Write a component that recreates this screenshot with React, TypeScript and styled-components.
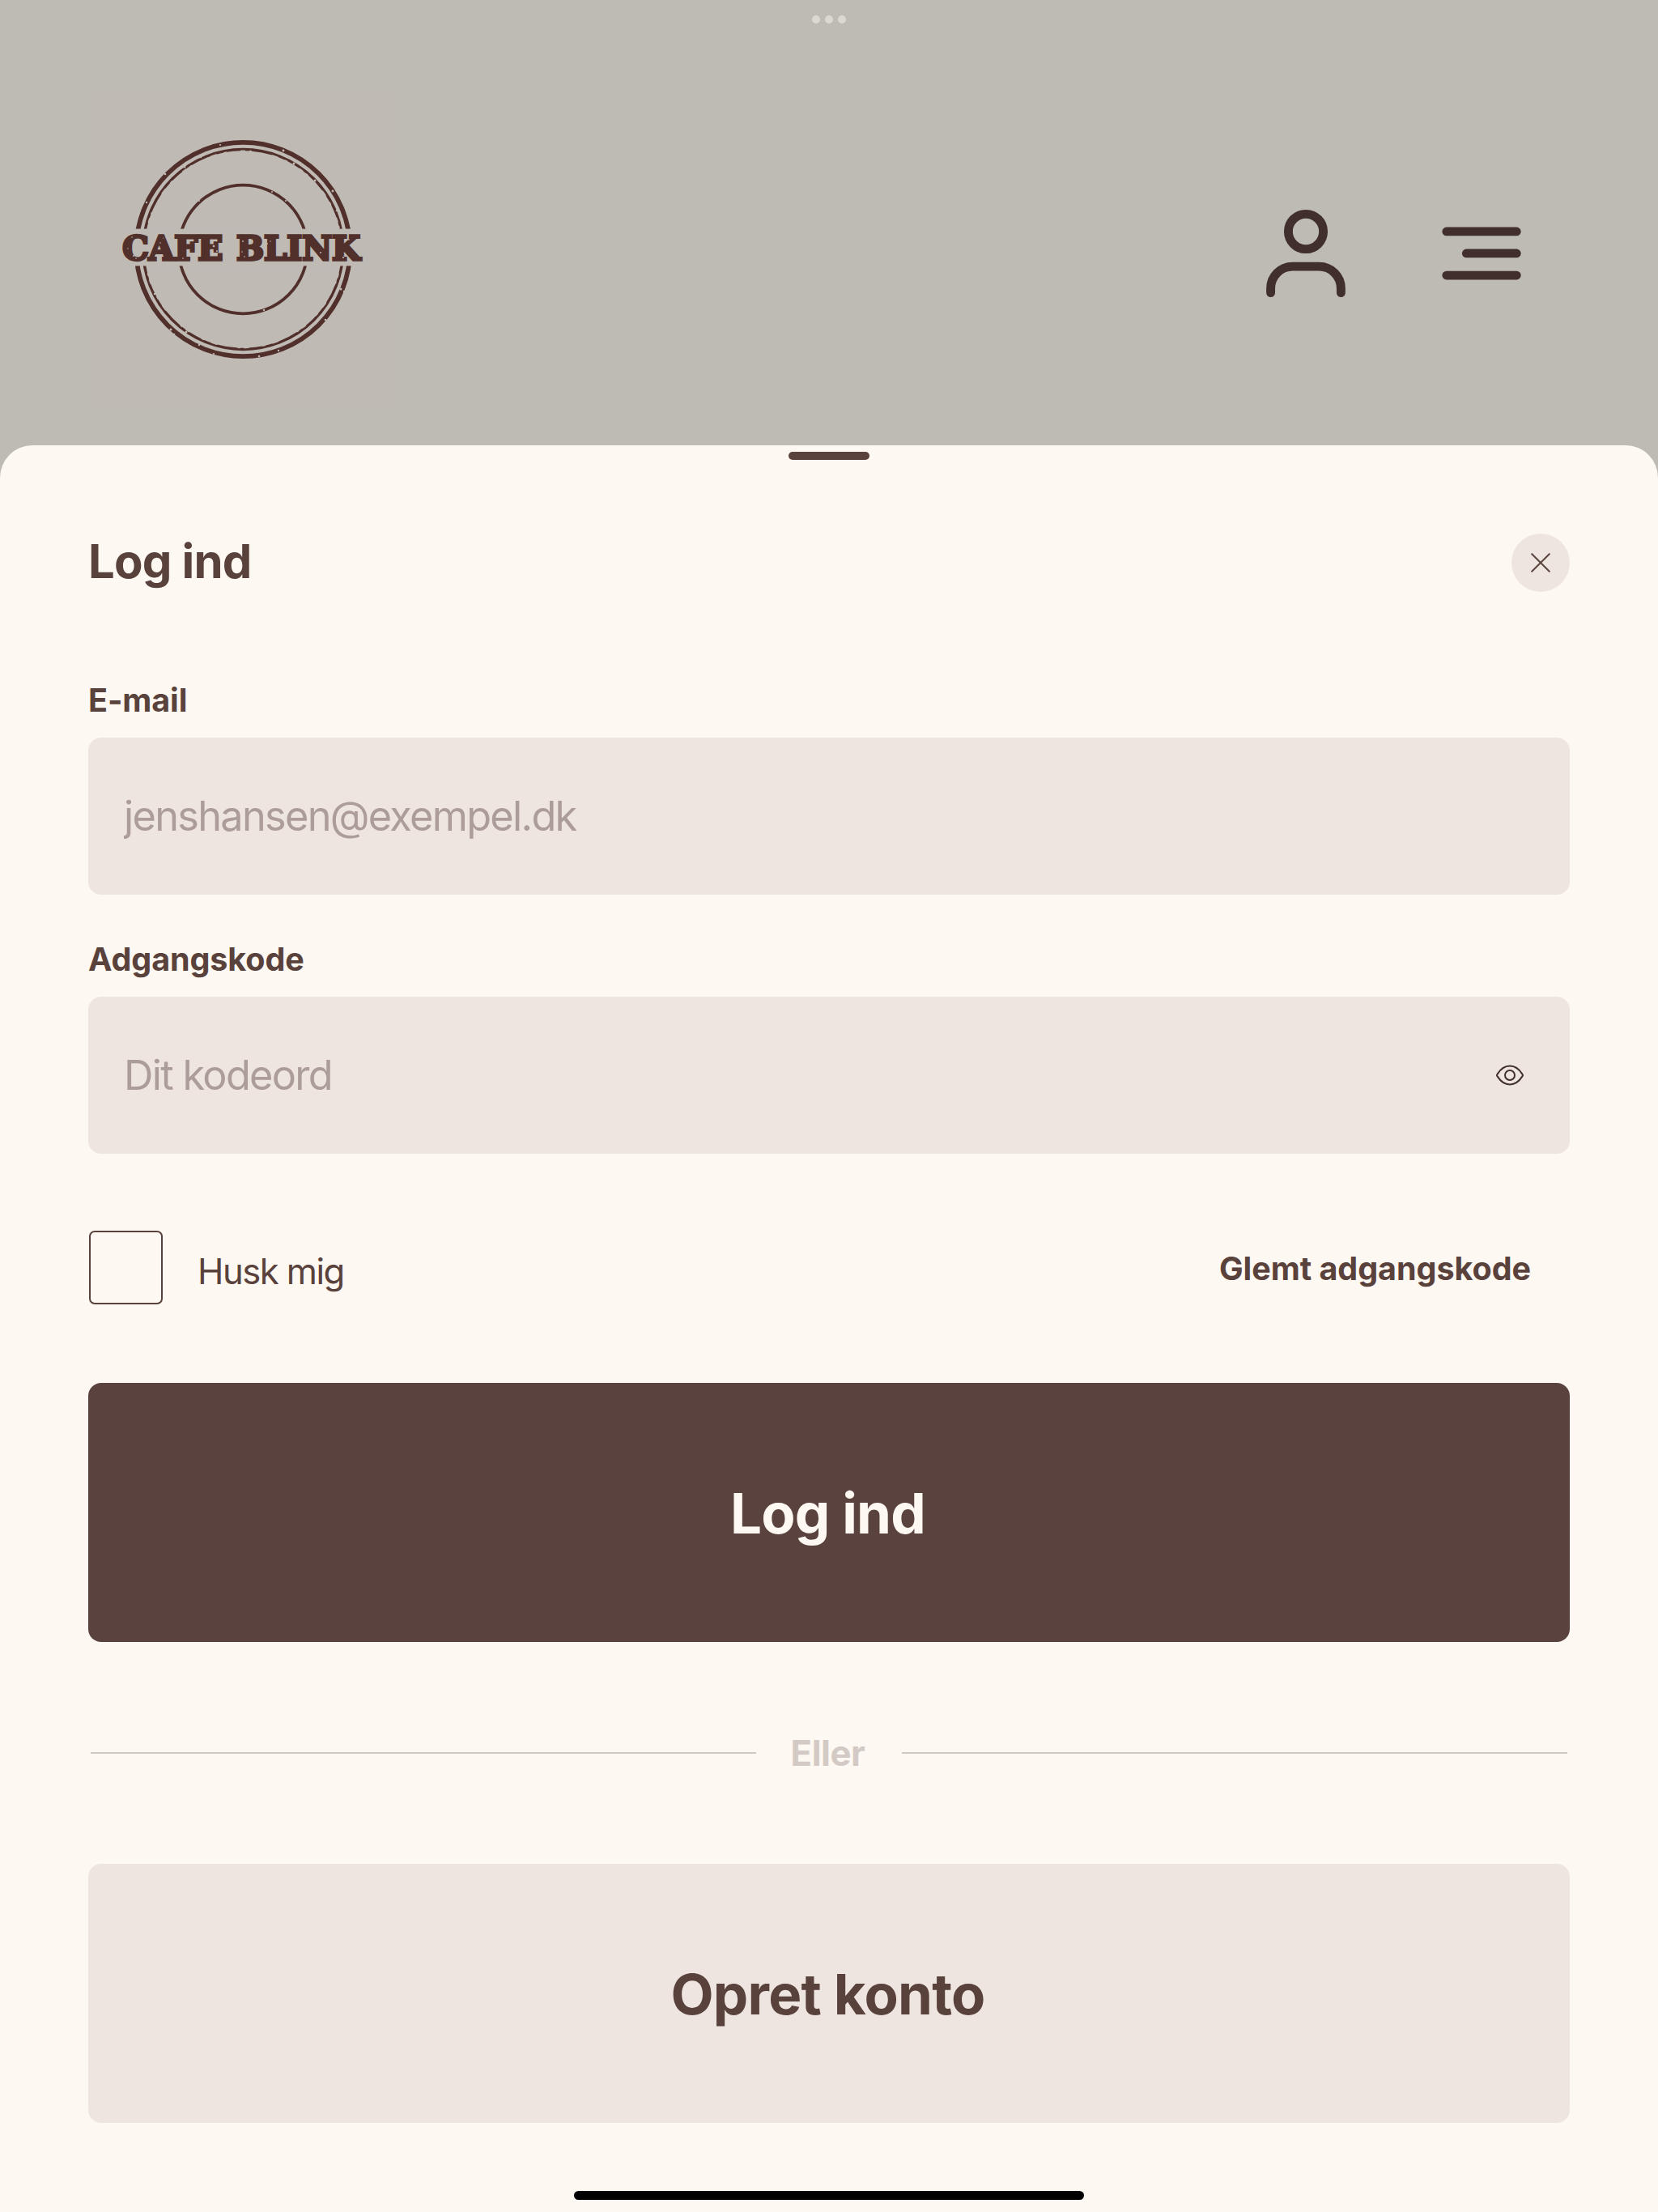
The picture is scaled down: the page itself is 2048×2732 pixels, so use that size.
import React from 'react';
import styled, { createGlobalStyle } from 'styled-components';

const GlobalStyle = createGlobalStyle`
  * {
    box-sizing: border-box;
  }

  body {
    margin: 0;
    background: #bebbb3;
    font-family: Inter, 'Liberation Sans', sans-serif;
  }
`;

const Screen = styled.div`
  display: flex;
  flex-direction: column;
  width: 2048px;
  height: 2732px;
  overflow: hidden;
  background: #bebbb3;
  color: #59413c;
`;

const Header = styled.header`
  display: flex;
  flex-direction: column;
  height: 550px;
`;

const Multitask = styled.div`
  display: flex;
  justify-content: center;
  gap: 6px;
  padding-top: 19px;
  height: 108px;

  span {
    width: 10px;
    height: 10px;
    border-radius: 50%;
    background: #dcd9d1;
  }
`;

const NavBar = styled.div`
  display: flex;
  justify-content: space-between;
  align-items: flex-start;
  padding: 0 158px 0 108px;
`;

const LogoBox = styled.div`
  width: 384px;
  height: 400px;
  background: #bfbab4;

  svg {
    display: block;
  }
`;

const NavIcons = styled.div`
  display: flex;
  align-items: center;
  gap: 96px;
  padding-top: 140px;
`;

const IconButton = styled.button`
  display: flex;
  padding: 0;
  border: none;
  background: none;
  color: #412f2d;
  cursor: pointer;
`;

const Sheet = styled.main`
  display: flex;
  flex-direction: column;
  flex: 1;
  padding: 8px 109px 0;
  border-radius: 40px 40px 0 0;
  background: #fdf8f1;
`;

const Handle = styled.div`
  align-self: center;
  width: 100px;
  height: 10px;
  border-radius: 5px;
  background: #59413c;
`;

const TitleRow = styled.div`
  display: flex;
  justify-content: space-between;
  align-items: center;
  height: 72px;
  margin: 91px 0 110px;
`;

const Title = styled.h1`
  margin: 0 0 4px;
  font-size: 58px;
  line-height: 68px;
  font-weight: 700;
  letter-spacing: -0.8px;
`;

const CloseButton = styled(IconButton)`
  align-items: center;
  justify-content: center;
  width: 72px;
  height: 72px;
  border-radius: 50%;
  background: #eee5e0;
  color: #59453c;
`;

const Form = styled.form`
  display: flex;
  flex-direction: column;
`;

const Field = styled.div`
  display: flex;
  flex-direction: column;
  margin-bottom: 56px;
`;

const Label = styled.label`
  margin-bottom: 22px;
  font-size: 39.5px;
  line-height: 48px;
  font-weight: 700;
  letter-spacing: -0.1px;
`;

const InputBox = styled.div`
  display: flex;
  align-items: center;
  height: 194px;
  padding: 0 57px 0 44px;
  border-radius: 16px;
  background: #eee5e0;
`;

const Input = styled.input`
  flex: 1;
  height: 100%;
  padding: 0 0 2px;
  border: none;
  outline: none;
  background: none;
  color: #59413c;
  font-family: inherit;
  font-size: 50.4px;
  letter-spacing: -1.68px;

  &::placeholder {
    color: #ac9d98;
    opacity: 1;
  }
`;

const Options = styled.div`
  display: flex;
  justify-content: space-between;
  align-items: center;
  height: 91px;
  margin: 39px 0 97px;
  padding: 0 48px 0 1px;
`;

const Remember = styled.label`
  display: flex;
  align-items: center;
  gap: 43px;

  span {
    padding-top: 11px;
    font-size: 43.6px;
    line-height: 52px;
    letter-spacing: -1.5px;
  }
`;

const Checkbox = styled.input`
  appearance: none;
  width: 91px;
  height: 91px;
  margin: 0;
  border: 2px solid #59413c;
  border-radius: 7px;
`;

const Forgot = styled.a`
  padding-top: 2px;
  font-size: 39.5px;
  line-height: 48px;
  font-weight: 700;
  letter-spacing: -0.05px;
`;

const Button = styled.button<{ $primary?: boolean }>`
  height: 320px;
  padding: 2px 3px 0 0;
  border: none;
  border-radius: 16px;
  background: ${(p) => (p.$primary ? '#5a433e' : '#eee5e0')};
  color: ${(p) => (p.$primary ? '#fdf8f1' : '#59413c')};
  font-family: inherit;
  font-size: 69px;
  font-weight: 700;
  letter-spacing: -0.75px;
  cursor: pointer;
`;

const Divider = styled.div`
  display: flex;
  align-items: center;
  height: 48px;
  margin: 113px 3px;
  color: #d4cac5;
  font-size: 43.6px;
  font-weight: 700;
  letter-spacing: -0.4px;

  &::before,
  &::after {
    content: '';
    width: 822px;
    height: 2px;
    background: #d0c8c2;
  }

  span {
    flex: 1;
    padding-right: 3px;
    text-align: center;
  }
`;

const HomeIndicator = styled.div`
  align-self: center;
  width: 630px;
  height: 11px;
  margin-top: 84px;
  border-radius: 6px;
  background: #000;
`;

// worn spots in the stamp print: x, y, radius
const specks = [
  [164, 71, 1.1], [242, 78, 1.4], [96, 107, 1.3], [73, 142, 1.2], [120, 98, 1.5],
  [140, 86, 1.2], [255, 94, 1.5], [281, 115, 1.5], [303, 128, 1.4], [308, 152, 1.2],
  [313, 249, 1.5], [317, 252, 1.2], [294, 287, 1.3], [270, 312, 1.2], [103, 299, 1.5],
  [107, 305, 1.3], [122, 302, 1.5], [138, 318, 1.2], [156, 329, 1.1], [212, 332, 1.3],
  [236, 325, 1.2], [225, 269, 1.2], [218, 275, 1.2], [228, 129, 1], [245, 140, 1],
  [138, 140, 1], [78, 240, 1.3], [83, 255, 1.2], [57, 208, 1], [60, 211, 0.8],
  [55, 185, 0.8], [50, 199, 0.7], [90, 192, 0.8], [109, 206, 0.9], [118, 211, 0.8],
  [156, 196, 1.3], [160, 202, 0.9], [192, 190, 0.9], [191, 203, 0.8], [194, 209, 0.8],
  [222, 193, 0.9], [250, 205, 0.7], [267, 206, 0.9], [288, 204, 1], [316, 210, 1.1],
  [319, 207, 0.8], [323, 188, 0.8], [94, 186, 0.6], [125, 208, 0.8], [226, 190, 0.7],
];

const Logo = () => (
  <svg width="384" height="400" viewBox="0 0 384 400">
    <g fill="none" stroke="#512f2b">
      <circle cx="192.3" cy="200" r="132.1" strokeWidth="5.7" />
      <circle cx="192.3" cy="200" r="123.8" strokeWidth="2.7" />
      <circle
        cx="192.3"
        cy="200"
        r="123"
        strokeWidth="2.4"
        strokeDasharray="9 4 17 6 5 3 26 8"
      />
      <circle cx="192.3" cy="200" r="79.4" strokeWidth="3.7" />
    </g>
    <rect x="40" y="174.6" width="304" height="45.8" fill="#bfbab4" />
    <g
      fontFamily="'DejaVu Serif', serif"
      fontWeight="700"
      fontSize="41.2"
      fill="#512f2b"
      stroke="#512f2b"
      strokeWidth="3.3"
    >
      <text x="43.2" y="212.7" textLength="124" lengthAdjust="spacingAndGlyphs">
        CAFE
      </text>
      <text x="184" y="212.7" textLength="153" lengthAdjust="spacingAndGlyphs">
        BLINK
      </text>
    </g>
    <g fill="#bfbab4">
      {specks.map(([x, y, r]) => (
        <circle key={`${x}-${y}`} cx={x} cy={y} r={r} />
      ))}
    </g>
  </svg>
);

const UserIcon = () => (
  <svg width="110" height="130" viewBox="1558 248 110 130" fill="none" stroke="currentColor" strokeWidth="10.9" strokeLinecap="round">
    <circle cx="1613" cy="286" r="21.6" />
    <path d="M1569.6 361.6v-5.4a27 27 0 0 1 27-27.1h32.8a27 27 0 0 1 27 27.1v5.4" />
  </svg>
);

const MenuIcon = () => (
  <svg width="126" height="130" viewBox="1764 248 126 130" fill="none" stroke="currentColor" strokeWidth="10.6" strokeLinecap="round">
    <path d="M1786.7 285.9h86.7M1811.2 312.9h62.2M1786.7 340.1h86.7" />
  </svg>
);

const CloseIcon = () => (
  <svg width="24" height="24" viewBox="0 0 24 24" fill="none" stroke="currentColor" strokeWidth="2" strokeLinecap="round">
    <path d="M1.2 1.2l21.6 21.6M22.8 1.2L1.2 22.8" />
  </svg>
);

const EyeIcon = () => (
  <svg width="34" height="26" viewBox="0 0 34 26" fill="none" stroke="currentColor" strokeWidth="2">
    <path d="M1.6 14.4a2.2 2.2 0 0 1 0-2.8C5.2 6 10.4 1.6 17 1.6s11.8 4.4 15.4 10a2.2 2.2 0 0 1 0 2.8C28.8 20 23.6 24.4 17 24.4S5.2 20 1.6 14.4z" />
    <circle cx="17" cy="13" r="6" />
  </svg>
);

const App = () => {
  return (
    <>
      <GlobalStyle />
      <Screen>
        <Header>
          <Multitask>
            <span />
            <span />
            <span />
          </Multitask>
          <NavBar>
            <LogoBox>
              <Logo />
            </LogoBox>
            <NavIcons>
              <IconButton aria-label="Profil">
                <UserIcon />
              </IconButton>
              <IconButton aria-label="Menu">
                <MenuIcon />
              </IconButton>
            </NavIcons>
          </NavBar>
        </Header>
        <Sheet>
          <Handle />
          <TitleRow>
            <Title>Log ind</Title>
            <CloseButton aria-label="Luk">
              <CloseIcon />
            </CloseButton>
          </TitleRow>
          <Form onSubmit={(e) => e.preventDefault()}>
            <Field>
              <Label htmlFor="email">E-mail</Label>
              <InputBox>
                <Input id="email" type="email" placeholder="jenshansen@exempel.dk" />
              </InputBox>
            </Field>
            <Field>
              <Label htmlFor="password">Adgangskode</Label>
              <InputBox>
                <Input id="password" type="password" placeholder="Dit kodeord" />
                <IconButton type="button" aria-label="Vis kodeord">
                  <EyeIcon />
                </IconButton>
              </InputBox>
            </Field>
            <Options>
              <Remember>
                <Checkbox type="checkbox" />
                <span>Husk mig</span>
              </Remember>
              <Forgot>Glemt adgangskode</Forgot>
            </Options>
            <Button $primary type="submit">
              Log ind
            </Button>
            <Divider>
              <span>Eller</span>
            </Divider>
            <Button type="button">Opret konto</Button>
          </Form>
          <HomeIndicator />
        </Sheet>
      </Screen>
    </>
  );
};

export default App;
